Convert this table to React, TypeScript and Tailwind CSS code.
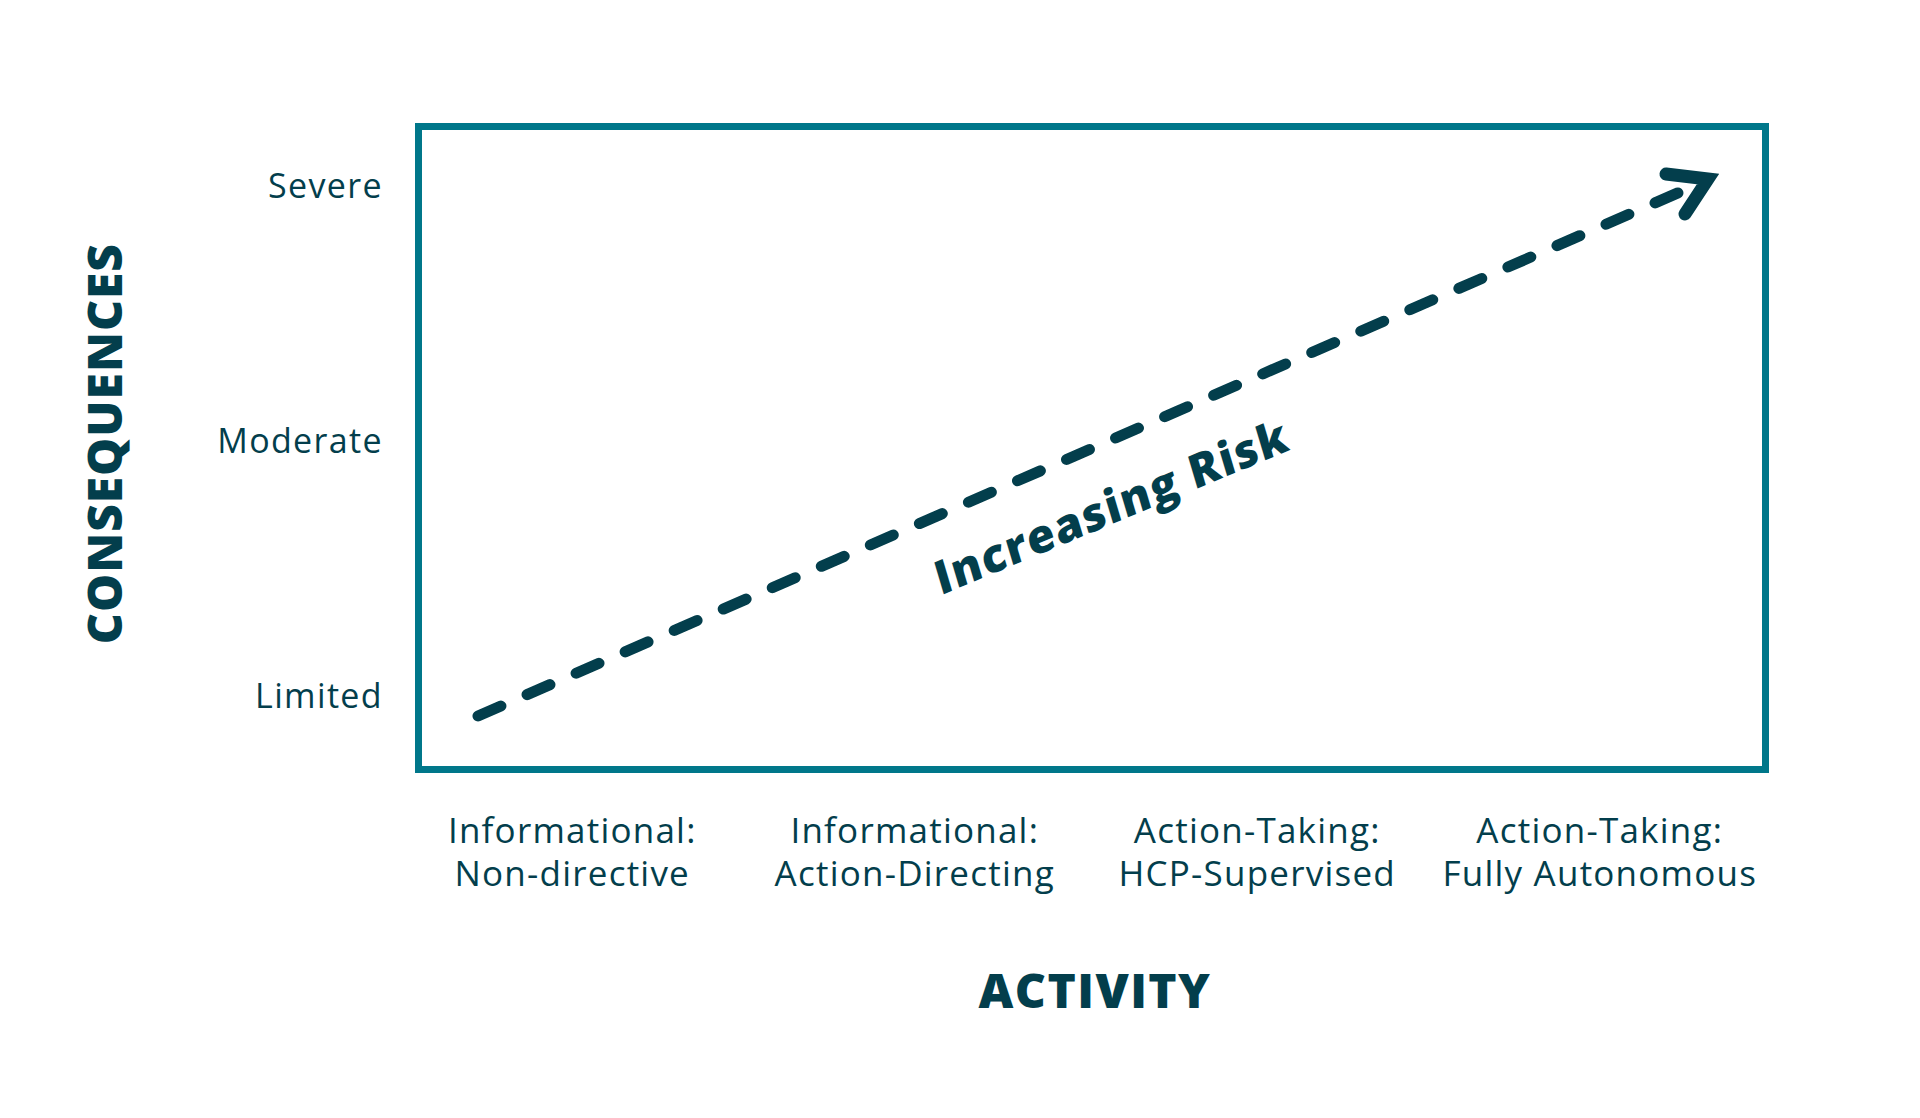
const INK = "#033e4c";

const yLevels = ["Severe", "Moderate", "Limited"];

const activities = [
  ["Informational:", "Non-directive"],
  ["Informational:", "Action-Directing"],
  ["Action-Taking:", "HCP-Supervised"],
  ["Action-Taking:", "Fully Autonomous"],
];

// dashed risk line + arrow head, in the box's outer coordinates (1354 x 650)
function RiskArrow() {
  return (
    <svg
      className="absolute -left-[7px] -top-[7px] w-[1354px] h-[650px] overflow-visible"
      viewBox="0 0 1354 650"
      fill="none"
    >
      <line
        x1={63}
        y1={593}
        x2={1265}
        y2={69}
        stroke={INK}
        strokeWidth={11}
        strokeLinecap="round"
        strokeDasharray="25 28.5"
      />
      <polyline
        points="1251,51 1293,56 1270,91"
        stroke={INK}
        strokeWidth={13}
        strokeLinecap="round"
        strokeLinejoin="miter"
        strokeMiterlimit={6}
      />
    </svg>
  );
}

export default function App() {
  return (
    <div
      className="w-full h-[1118px] bg-white flex flex-col pt-[123px] text-[#033e4c]"
      style={{ fontFamily: '"Open Sans", "Liberation Sans", sans-serif' }}
    >
      {/* chart row */}
      <div className="flex h-[650px]">
        <div className="w-[415px] flex shrink-0">
          <div className="w-[128px] flex items-center justify-end pb-[8px]">
            <span className="[writing-mode:vertical-rl] rotate-180 text-[48px] leading-[48px] font-extrabold tracking-[0.02em]">
              CONSEQUENCES
            </span>
          </div>
          <div className="flex-1 flex flex-col items-end pr-[32px] pt-[42px] gap-[215px]">
            {yLevels.map((label) => (
              <span key={label} className="text-[34px] leading-[40px] font-medium tracking-[0.04em]">
                {label}
              </span>
            ))}
          </div>
        </div>

        <div className="relative w-[1354px] h-[650px] shrink-0 border-[7px] border-[#00778a]">
          <RiskArrow />
          <span className="absolute left-[689px] top-[375px] -translate-x-1/2 -translate-y-1/2 -rotate-[22.6deg] -skew-x-6 whitespace-nowrap text-[46px] leading-[46px] font-extrabold tracking-[0.03em]">
            Increasing Risk
          </span>
        </div>
      </div>

      {/* activity labels */}
      <div className="ml-[401px] w-[1370px] grid grid-cols-4 mt-[35px]">
        {activities.map(([a, b], i) => (
          <div key={i} className="flex flex-col items-center text-[35px] leading-[43px] font-medium tracking-[0.035em]">
            <span>{a}</span>
            <span>{b}</span>
          </div>
        ))}
      </div>

      <div className="ml-[418px] w-[1354px] mt-[72px] text-center text-[48px] leading-[48px] font-extrabold tracking-[0.03em]">
        ACTIVITY
      </div>
    </div>
  );
}
